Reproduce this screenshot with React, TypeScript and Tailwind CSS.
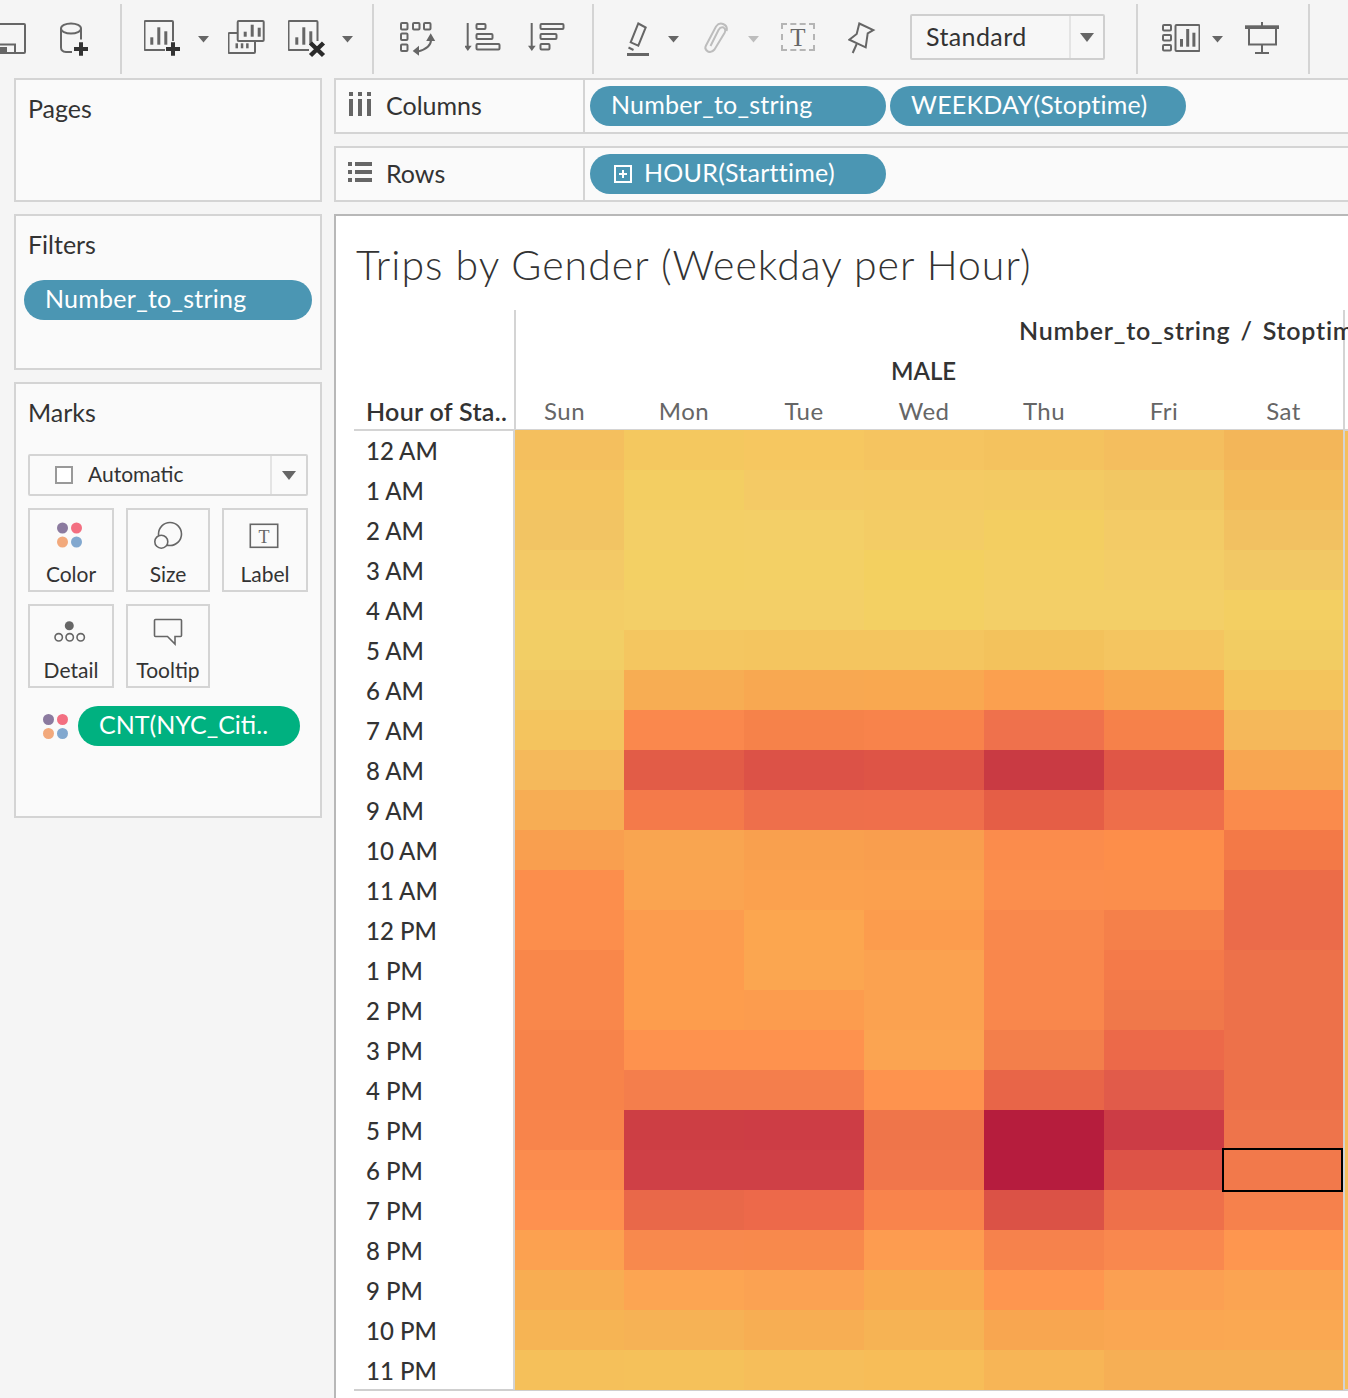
import React from "react";

const FONT = "font-['Lato','Liberation_Sans',sans-serif]";
const G = "#666666";

const heat: string[][] = [
  ["#f4bf5e","#f4c85f","#f6c760","#f5c460","#f4c25e","#f4be5e","#f3b659"],
  ["#f4c45f","#f3ce62","#f4ca65","#f4ca64","#f3ca63","#f2c763","#f3bc5b"],
  ["#f2c463","#f3cf66","#f3cf67","#f3cc65","#f3ce61","#f3cb66","#f2c161"],
  ["#f3c966","#f3d064","#f3d065","#f3d060","#f3cf64","#f3cd67","#f2c865"],
  ["#f3cd66","#f3cf67","#f3cf67","#f3d063","#f3cf67","#f3cf67","#f3cf62"],
  ["#f2ce65","#f4c660","#f4c55f","#f4c55f","#f3c25c","#f4c560","#f2cc62"],
  ["#f2c963","#f7ad53","#f8a851","#f9a850","#fba04f","#f8a850","#f4c45c"],
  ["#f4c45e","#fa884d","#f6824a","#f8834b","#ef714c","#f6814a","#f5b85a"],
  ["#f5b95b","#e25c47","#dc5247","#de5446","#c93a43","#e05646","#f8a651"],
  ["#f7ad54","#f47a4a","#ee6f4b","#ef6f4b","#e55e46","#ee6e4a","#fa8b4c"],
  ["#f99f4f","#f9a550","#f9a04e","#f99e4e","#fb8c4c","#fd8e4a","#f37947"],
  ["#fc8e4c","#faa450","#fba14e","#fba04e","#fb8e4d","#fb8e4c","#ec6c48"],
  ["#fc8e4c","#fc9c4e","#fca64f","#fc9c4d","#f9884c","#f5804a","#eb6b4a"],
  ["#f9874a","#fd9c4d","#fba650","#fba250","#f9874c","#f47a49","#ed714a"],
  ["#f9874b","#fd9d4d","#fc9c4e","#fba250","#f9874c","#f0784a","#ed714a"],
  ["#f7834a","#fe924e","#fe924e","#fba451","#f37f4b","#ec6949","#ed714a"],
  ["#f7834a","#f47e4c","#f47e4c","#fe934e","#e86548","#e15b4a","#ed714a"],
  ["#f8844b","#cd3e44","#cd3d45","#ef754a","#b61d3d","#cc3c45","#ee744b"],
  ["#fb8c4e","#cf4046","#cf4046","#f1764b","#b61c3e","#dd5347","#f2794b"],
  ["#fe914f","#e96849","#ed694a","#f9844c","#db5246","#ee704a","#f6814c"],
  ["#fca150","#f8894d","#f8894c","#fd9c50","#f6824c","#f9884e","#fe964f"],
  ["#f8ad52","#fca552","#fba252","#f9aa50","#fe964f","#fba052","#fba452"],
  ["#f6b454","#f6b255","#f7ae53","#f6b354","#f8a650","#faa752","#faa852"],
  ["#f5c05a","#f5c15a","#f6be5a","#f7bd58","#f7b556","#f6af55","#f6af55"],
];
const hours = ["12 AM","1 AM","2 AM","3 AM","4 AM","5 AM","6 AM","7 AM","8 AM","9 AM","10 AM","11 AM","12 PM","1 PM","2 PM","3 PM","4 PM","5 PM","6 PM","7 PM","8 PM","9 PM","10 PM","11 PM"];
const days = ["Sun","Mon","Tue","Wed","Thu","Fri","Sat"];
const GRID = "grid grid-cols-[109px_120px_120px_120px_120px_120px_119px]";

function Ico({ w, className = "", children }: { w: number; className?: string; children: React.ReactNode }) {
  return (
    <svg width={w} height={78} viewBox={`0 0 ${w} 78`} fill="none" stroke={G} strokeWidth={2} className={"shrink-0 " + className}>
      {children}
    </svg>
  );
}
function Caret({ className = "", color = G }: { className?: string; color?: string }) {
  return (
    <Ico w={11} className={className}>
      <path d="M0 36h11l-5.5 6.5z" fill={color} stroke="none" />
    </Ico>
  );
}
function Bars({ x, y, h1, h2, h3, w = 3, gap = 7 }: { x: number; y: number; h1: number; h2: number; h3: number; w?: number; gap?: number }) {
  return (
    <g stroke="none" fill={G}>
      <rect x={x} y={y - h1} width={w} height={h1} />
      <rect x={x + gap} y={y - h2} width={w} height={h2} />
      <rect x={x + gap * 2} y={y - h3} width={w} height={h3} />
    </g>
  );
}
function Sep({ className }: { className: string }) {
  return <div className={"w-[2px] h-[70px] mt-[4px] bg-[#d4d4d4] shrink-0 self-start " + className} />;
}
function Dots({ className = "" }: { className?: string }) {
  return (
    <div className={"grid grid-cols-[11px_11px] gap-[3px] shrink-0 " + className}>
      <span className="w-[11px] h-[11px] rounded-full bg-[#8b7a9f]" />
      <span className="w-[11px] h-[11px] rounded-full bg-[#f36f81]" />
      <span className="w-[11px] h-[11px] rounded-full bg-[#f2a97c]" />
      <span className="w-[11px] h-[11px] rounded-full bg-[#82a8cf]" />
    </div>
  );
}
function Pill({ className = "", children }: { className?: string; children: React.ReactNode }) {
  return (
    <div className={"h-[40px] pb-[2px] rounded-[20px] bg-[#4b96b3] text-white text-[25px] tracking-[0.25px] flex items-center whitespace-nowrap shrink-0 " + className}>
      {children}
    </div>
  );
}
function Card({ label, className = "", children }: { label: string; className?: string; children: React.ReactNode }) {
  return (
    <div className={"h-[84px] border-2 border-[#d4d4d4] flex flex-col items-center " + className}>
      <svg width={40} height={44} viewBox="0 0 40 44" fill="none" stroke={G} strokeWidth={1.6} className="mt-[6px] shrink-0">{children}</svg>
      <span className="text-[21px] leading-[26px] text-[#333] mt-[1px]">{label}</span>
    </div>
  );
}

function Toolbar() {
  return (
    <div className="h-[78px] flex items-start">
      <Ico w={27}>
        <path d="M0 24h24q1 0 1 1v27q0 1-1 1H0" />
        <path d="M0 44.500h15V53" />
        <rect x={0} y={47} width={7} height={6} fill={G} stroke="none" />
      </Ico>
      <Ico w={30} className="ml-[33px]">
        <ellipse cx={11} cy={28.500} rx={10} ry={5} />
        <path d="M1 28.500v19q0 4 5 4.500h6" />
        <path d="M21 28.500v11" />
        <path d="M14 49h14M21 42.300v13.400" stroke="#333" strokeWidth={4} />
      </Ico>
      <Sep className="ml-[30px]" />
      <Ico w={38} className="ml-[22px]">
        <path d="M29 41V22q0-1-1-1H1.500q-1 0-1 1v27q0 1 1 1H21" />
        <Bars x={6.3} y={44.700} h1={7.400} h2={17.400} h3={13.400} />
        <path d="M22 49h14M29 42.300v13.400" stroke="#333" strokeWidth={4} />
      </Ico>
      <Caret className="ml-[16px]" />
      <Ico w={38} className="ml-[19px]">
        <rect x={9.700} y={21} width={26} height={20} rx={1} />
        <path d="M9.700 33H1.500q-1 0-1 1v18q0 1 1 1H26q1 0 1-1v-11" />
        <Bars x={15.700} y={36.700} h1={5} h2={12} h3={9} />
        <Bars x={7.500} y={48.300} h1={5} h2={5} h3={5} w={2.500} gap={5.300} />
      </Ico>
      <Ico w={38} className="ml-[22px]">
        <path d="M29.500 41V22q0-1-1-1H1.500q-1 0-1 1v27q0 1 1 1H21" />
        <Bars x={7.300} y={44.700} h1={7.400} h2={17.400} h3={13.400} />
        <path d="M22.500 43l13 12.500M35.500 43l-13 12.500" stroke="#2a2a2a" strokeWidth={4.500} />
      </Ico>
      <Caret className="ml-[16px]" />
      <Sep className="ml-[19px]" />
      <Ico w={38} className="ml-[26px]">
        <rect x={1} y={23} width={6.500} height={6.500} rx={1} />
        <rect x={13} y={23} width={6.500} height={6.500} rx={1} />
        <rect x={24} y={23} width={6.500} height={6.500} rx={1} />
        <rect x={1} y={33.500} width={6.500} height={6.500} rx={1} />
        <rect x={1} y={44.500} width={6.500} height={6.500} rx={1} />
        <path d="M31 40q0 8-13 11.500" />
        <path d="M30.700 33.300l4.500 7.700h-9zM12.700 51l6.300-5.300v10z" fill={G} stroke="none" />
      </Ico>
      <Ico w={36} className="ml-[27px]">
        <path d="M2.700 23v23" />
        <path d="M-1 45.700h7.700l-3.900 5.300z" fill={G} stroke="none" />
        <rect x={11.500} y={24} width={9} height={5} rx={1} />
        <rect x={11.500} y={34} width={16} height={5} rx={1} />
        <rect x={11.500} y={44} width={23} height={5.500} rx={1} />
      </Ico>
      <Ico w={37} className="ml-[27px]">
        <path d="M3.700 23v23" />
        <path d="M0 45.700h7.700l-3.900 5.300z" fill={G} stroke="none" />
        <rect x={12.500} y={24} width={23} height={5} rx={1} />
        <rect x={12.500} y={34} width={16} height={5} rx={1} />
        <rect x={12.500} y={44} width={9} height={5.500} rx={1} />
      </Ico>
      <Sep className="ml-[27px]" />
      <Ico w={24} className="ml-[33px]">
        <path d="M11.300 23.500l7.400 4-7.400 18.200-7.600-3.400z" />
        <path d="M1.500 47.500l5 2.500" />
        <rect x={0} y={53} width={22} height={3} fill={G} stroke="none" />
      </Ico>
      <Caret className="ml-[17px]" />
      <Ico w={25} className="ml-[24px]">
        <path d="M7.500 46L15.500 30Q17.500 26.500 20.500 27.500Q23.500 29.500 21.500 33L11.500 49.500Q8.500 53 5 51.500Q1 49.500 3 45.500L13 26.500Q16 22.500 20 24Q25 26 23.500 31" stroke="#bdbdbd" />
      </Ico>
      <Caret className="ml-[20px]" color="#bdbdbd" />
      <div className="ml-[22px] mt-[23px] w-[34px] h-[28px] border-2 border-dashed border-[#b5b5b5] shrink-0 flex items-center justify-center font-['Liberation_Serif',serif] text-[25px] leading-none text-[#666]">T</div>
      <Ico w={28} className="ml-[33px]">
        <path d="M11.300 23.500L25.300 30l-5.600 3.300-2 14L1.300 39.700 8.700 34z" />
        <path d="M8.700 44l-4 9" />
      </Ico>
      <div className="ml-[34px] mt-[14px] w-[195px] h-[46px] border-2 border-[#cfcfcf] rounded-[2px] flex shrink-0 bg-[#f7f7f7]">
        <span className="w-[157px] pl-[14px] text-[25px] leading-[41px] tracking-[0.4px] text-[#333]">Standard</span>
        <span className="flex-1 border-l-2 border-[#e4e4e4] flex items-center justify-center">
          <svg width={14} height={9} viewBox="0 0 14 9"><path d="M0 0h14L7 9z" fill={G} /></svg>
        </span>
      </div>
      <Sep className="ml-[31px]" />
      <Ico w={38} className="ml-[24px]">
        <rect x={1} y={25} width={8} height={5.500} rx={1} />
        <rect x={1} y={35} width={8} height={5.500} rx={1} />
        <rect x={1} y={45} width={8} height={5.500} rx={1} />
        <rect x={13.500} y={25} width={24} height={26} rx={1} />
        <Bars x={18} y={46.700} h1={7.700} h2={17.700} h3={14} gap={6.200} />
      </Ico>
      <Caret className="ml-[12px]" />
      <Ico w={35} className="ml-[22px]">
        <rect x={0} y={25.300} width={34} height={3.700} fill={G} stroke="none" />
        <path d="M17 22v4M4 28v16.500h27V28M17 44.500v8.500M10 53h14" />
      </Ico>
      <Sep className="ml-[28px]" />
    </div>
  );
}

function Sidebar() {
  return (
    <div className="w-[308px] ml-[14px] flex flex-col gap-[12px] shrink-0 text-[#333]">
      <div className="h-[124px] border-2 border-[#d4d4d4] bg-[#fafafa] pl-[12px] pt-[12px] text-[25px] leading-[32px]">Pages</div>
      <div className="h-[156px] border-2 border-[#d4d4d4] bg-[#fafafa] pt-[12px] flex flex-col">
        <div className="pl-[12px] text-[25px] leading-[32px]">Filters</div>
        <Pill className="ml-[8px] mt-[20px] w-[288px] pl-[21px]">Number_to_string</Pill>
      </div>
      <div className="h-[436px] border-2 border-[#d4d4d4] bg-[#fafafa] pt-[12px] px-[12px] flex flex-col">
        <div className="text-[25px] leading-[32px]">Marks</div>
        <div className="mt-[26px] h-[42px] border-2 border-[#d4d4d4] rounded-[2px] flex">
          <span className="w-[240px] flex items-center pl-[25px]">
            <span className="w-[18px] h-[18px] border-2 border-[#999] bg-white shrink-0" />
            <span className="ml-[15px] pb-[3px] text-[21px] leading-none">Automatic</span>
          </span>
          <span className="flex-1 border-l-2 border-[#e4e4e4] flex items-center justify-center">
            <svg width={14} height={9} viewBox="0 0 14 9"><path d="M0 0h14L7 9z" fill={G} /></svg>
          </span>
        </div>
        <div className="mt-[12px] grid grid-cols-[86px_84px_86px] gap-x-[12px] gap-y-[12px]">
          <Card label="Color">
            <circle cx={11.500} cy={12} r={5.500} fill="#8b7a9f" stroke="none" />
            <circle cx={25.500} cy={12} r={5.500} fill="#f36f81" stroke="none" />
            <circle cx={11.500} cy={26} r={5.500} fill="#f2a97c" stroke="none" />
            <circle cx={25.500} cy={26} r={5.500} fill="#82a8cf" stroke="none" />
          </Card>
          <Card label="Size">
            <circle cx={22} cy={18} r={11.500} />
            <circle cx={13.300} cy={25.700} r={6.500} fill="#fafafa" />
          </Card>
          <Card label="Label">
            <rect x={5.300} y={8.300} width={27.400} height={23} />
            <text x={19} y={26.500} fontFamily="'Liberation Serif',serif" fontSize={18} textAnchor="middle" fill={G} stroke="none">T</text>
          </Card>
          <Card label="Detail">
            <circle cx={18.300} cy={13.700} r={4.500} fill={G} stroke="none" />
            <circle cx={7.700} cy={25.300} r={3.700} />
            <circle cx={18.700} cy={25.300} r={3.700} />
            <circle cx={29.700} cy={25.300} r={3.700} />
          </Card>
          <Card label="Tooltip">
            <path d="M7.500 7.500h25q1 0 1 1v15q0 1-1 1H27v7.500l-7.500-7.500h-12q-1 0-1-1v-15q0-1 1-1z" />
          </Card>
        </div>
        <div className="mt-[18px] flex items-center">
          <Dots className="ml-[15px]" />
          <div className="ml-[10px] w-[222px] h-[40px] pb-[2px] rounded-[20px] bg-[#00b180] text-white text-[25px] pl-[21px] flex items-center shrink-0">CNT(NYC_Citi..</div>
        </div>
      </div>
    </div>
  );
}

function Shelf({ label, icon, children }: { label: string; icon: React.ReactNode; children: React.ReactNode }) {
  return (
    <div className="h-[56px] border-y-2 border-l-2 border-[#d4d4d4] bg-[#fafafa] flex">
      <div className="w-[249px] border-r-2 border-[#d4d4d4] flex items-center text-[25px] text-[#333] shrink-0">
        <span className="w-[50px] pl-[12px] flex shrink-0">{icon}</span>
        {label}
      </div>
      <div className="flex pl-[5px] pt-[6px] gap-[4px]">{children}</div>
    </div>
  );
}

function Chart() {
  return (
    <div className="mt-[12px] h-[1184px] border-l-2 border-t-2 border-[#b8b8b8] bg-white pl-[18px] overflow-hidden">
      <div className="pl-[2px] h-[94px] pt-[20px] text-[41px] leading-[58px] tracking-[1px] font-light text-[#333] whitespace-nowrap">Trips by Gender (Weekday per Hour)</div>
      <div className="flex h-[120px]">
        <div className="w-[160px] flex items-end shrink-0">
          <span className="pl-[12px] pb-[3px] text-[25px] leading-[32px] font-semibold tracking-[0.3px] text-[#333] whitespace-nowrap">Hour of Sta..</span>
        </div>
        <div className="w-[831px] border-l-2 border-r-2 border-[#d4d4d4] flex flex-col shrink-0">
          <div className="h-[40px] pt-[2px] pl-[503px] flex items-center text-[25px] font-semibold tracking-[0.75px] text-[#333] whitespace-nowrap">
            Number_to_string
            <span className="mx-[10px]">/</span>
            Stoptime
          </div>
          <div className="h-[40px] pt-[2px] pl-[375px] flex items-center text-[24px] font-semibold text-[#333]">MALE</div>
          <div className={GRID + " h-[40px] -ml-[1px]"}>
            {days.map((d) => (
              <span key={d} className={(d === "Sun" ? "pr-[10px] " : "") + "text-center text-[24px] leading-[42px] tracking-[0.5px] text-[#666]"}>{d}</span>
            ))}
          </div>
        </div>
      </div>
      <div className="relative flex">
        <div className="absolute left-0 right-0 -top-[1px] h-[2px] bg-[#d4d4d4]" />
        <div className="absolute left-0 right-0 -bottom-[1px] h-[2px] bg-[#cfcfcf]" />
        <div className="w-[159px] shrink-0">
          {hours.map((h) => (
            <div key={h} className="h-[40px] pl-[12px] pt-[1px] text-[24px] leading-[40px] font-medium text-[#333]">{h}</div>
          ))}
        </div>
        <div className={GRID + " border-l-2 border-[#d4d4d4] shrink-0"}>
          {heat.flatMap((row, r) =>
            row.map((c, i) => (
              <div key={r + "-" + i} className={"relative h-[40px] " + (r === 18 && i === 6 ? "z-10" : "")} style={{ backgroundColor: c }}>
                {r === 18 && i === 6 && (
                  <div className="absolute -left-[2px] -top-[2px] right-0 -bottom-[2px] border-2 border-black" />
                )}
              </div>
            ))
          )}
        </div>
        <div className="w-[2px] bg-[#d4d4d4] shrink-0" />
        <div className="w-[3px] bg-[#f5bf5d] shrink-0" />
      </div>
    </div>
  );
}

export default function App() {
  return (
    <div className={"relative w-[1348px] h-[1398px] overflow-hidden bg-[#f5f5f5] " + FONT}>
      <Toolbar />
      <div className="flex">
        <Sidebar />
        <div className="ml-[12px] flex-1 min-w-0 flex flex-col">
          <Shelf
            label="Columns"
            icon={
              <svg width={22} height={24} viewBox="0 0 22 24" fill={G} className="ml-[1px] -translate-y-[2px]">
                <rect x={0} y={0} width={4} height={4} /><rect x={9} y={0} width={4} height={4} /><rect x={18} y={0} width={4} height={4} />
                <rect x={0} y={7} width={4} height={17} /><rect x={9} y={7} width={4} height={17} /><rect x={18} y={7} width={4} height={17} />
              </svg>
            }
          >
            <Pill className="w-[296px] pl-[21px]">Number_to_string</Pill>
            <Pill className="w-[296px] pl-[21px]">WEEKDAY(Stoptime)</Pill>
          </Shelf>
          <div className="mt-[12px]">
            <Shelf
              label="Rows"
              icon={
                <svg width={24} height={20} viewBox="0 0 24 20" fill={G} className="-translate-y-[2px]">
                  <rect x={0} y={0} width={4} height={4} /><rect x={7} y={0} width={17} height={4} />
                  <rect x={0} y={8} width={4} height={4} /><rect x={7} y={8} width={17} height={4} />
                  <rect x={0} y={16} width={4} height={4} /><rect x={7} y={16} width={17} height={4} />
                </svg>
              }
            >
              <Pill className="w-[296px] pl-[24px]">
                <svg width={18} height={18} viewBox="0 0 18 18" fill="none" stroke="#fff" strokeWidth={2} className="mr-[12px] mt-[2px] shrink-0">
                  <rect x={1} y={1} width={16} height={16} />
                  <path d="M5 9h8M9 5v8" />
                </svg>
                HOUR(Starttime)
              </Pill>
            </Shelf>
          </div>
          <Chart />
        </div>
      </div>
    </div>
  );
}
